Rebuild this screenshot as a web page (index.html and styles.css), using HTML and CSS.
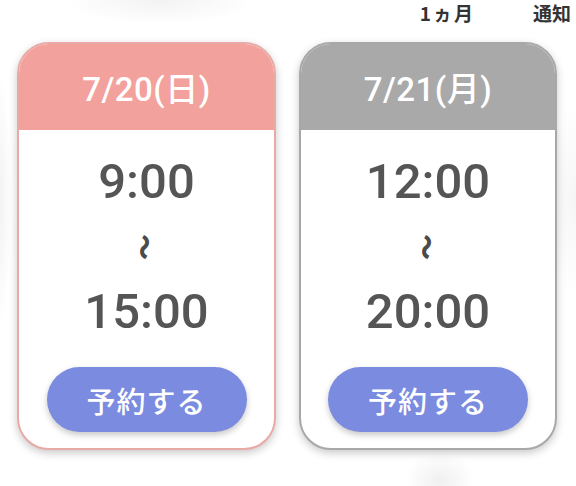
FILE: index.html
```html
<!DOCTYPE html>
<html lang="ja">
<head>
<meta charset="utf-8">
<link rel="stylesheet" href="styles.css">
</head>
<body>
<div class="topbar">
  <span class="tab tab-month">1ヵ月</span>
  <span class="tab tab-notify">通知</span>
</div>
<div class="cards">
  <div class="card card-sun">
    <div class="card-head">7/20(日)</div>
    <div class="card-body">
      <div class="time">9:00</div>
      <div class="wave"><span>〜</span></div>
      <div class="time">15:00</div>
      <button class="reserve">予約する</button>
    </div>
  </div>
  <div class="card card-mon">
    <div class="card-head">7/21(月)</div>
    <div class="card-body">
      <div class="time">12:00</div>
      <div class="wave"><span>〜</span></div>
      <div class="time">20:00</div>
      <button class="reserve">予約する</button>
    </div>
  </div>
</div>
</body>
</html>
```
FILE: styles.css
```css
html, body {
  margin: 0;
  padding: 0;
}
body {
  width: 576px;
  height: 486px;
  overflow: hidden;
  font-family: Roboto, "Noto Sans CJK JP", sans-serif;
  color: #4a4a4a;
  background:
    radial-gradient(ellipse 50px 40px at 440px 480px, rgba(0,0,0,0.06), rgba(0,0,0,0) 70%),
    radial-gradient(ellipse 14px 160px at 0px 200px, rgba(0,0,0,0.05), rgba(0,0,0,0) 80%),
    radial-gradient(ellipse 40px 120px at 576px 200px, rgba(0,0,0,0.04), rgba(0,0,0,0) 80%),
    radial-gradient(ellipse 120px 30px at 160px 0px, rgba(0,0,0,0.05), rgba(0,0,0,0) 80%),
    #ffffff;
}
.topbar {
  height: 27px;
  padding-top: 3px;
  display: flex;
  justify-content: flex-end;
  align-items: flex-start;
  gap: 58px;
  padding-right: 5px;
}
.tab {
  font-family: "Noto Sans CJK JP", sans-serif;
  font-size: 19px;
  font-weight: 700;
  line-height: 20px;
  color: #333333;
}
.tab-month {
  letter-spacing: 2px;
}
.cards {
  display: flex;
  gap: 23px;
  padding-left: 17px;
  margin-top: 12px;
}
.card {
  width: 259px;
  box-sizing: border-box;
  border: 2px solid #e9aaa6;
  border-radius: 32px;
  overflow: hidden;
  background: #ffffff;
  box-shadow: 0 3px 8px rgba(0,0,0,0.22);
}
.card-mon {
  width: 258px;
  border-color: #a8a8a8;
}
.card-head {
  height: 86px;
  display: flex;
  align-items: center;
  justify-content: center;
  color: #ffffff;
  font-size: 33px;
  font-weight: 500;
  letter-spacing: 0.5px;
  background: #f2a19c;
}
.card-mon .card-head {
  background: #a9a9a9;
}
.card-body {
  display: flex;
  flex-direction: column;
  align-items: center;
  padding: 22px 0 16px;
}
.time {
  font-size: 49px;
  font-weight: 500;
  line-height: 60px;
  height: 60px;
  color: #555555;
}
.wave {
  height: 70px;
  display: flex;
  align-items: center;
  justify-content: center;
}
.wave span {
  display: inline-block;
  transform: rotate(90deg);
  font-family: "Noto Sans CJK JP", sans-serif;
  font-size: 26px;
  font-weight: 900;
  color: #4b4b4b;
  line-height: 26px;
}
.reserve {
  margin-top: 25px;
  width: 200px;
  height: 65px;
  border: none;
  border-radius: 33px;
  background: #7a8be0;
  color: #ffffff;
  font-family: "Noto Sans CJK JP", sans-serif;
  font-size: 29px;
  font-weight: 500;
  letter-spacing: 1px;
  box-shadow: 0 3px 6px rgba(0,0,0,0.22);
}
```
